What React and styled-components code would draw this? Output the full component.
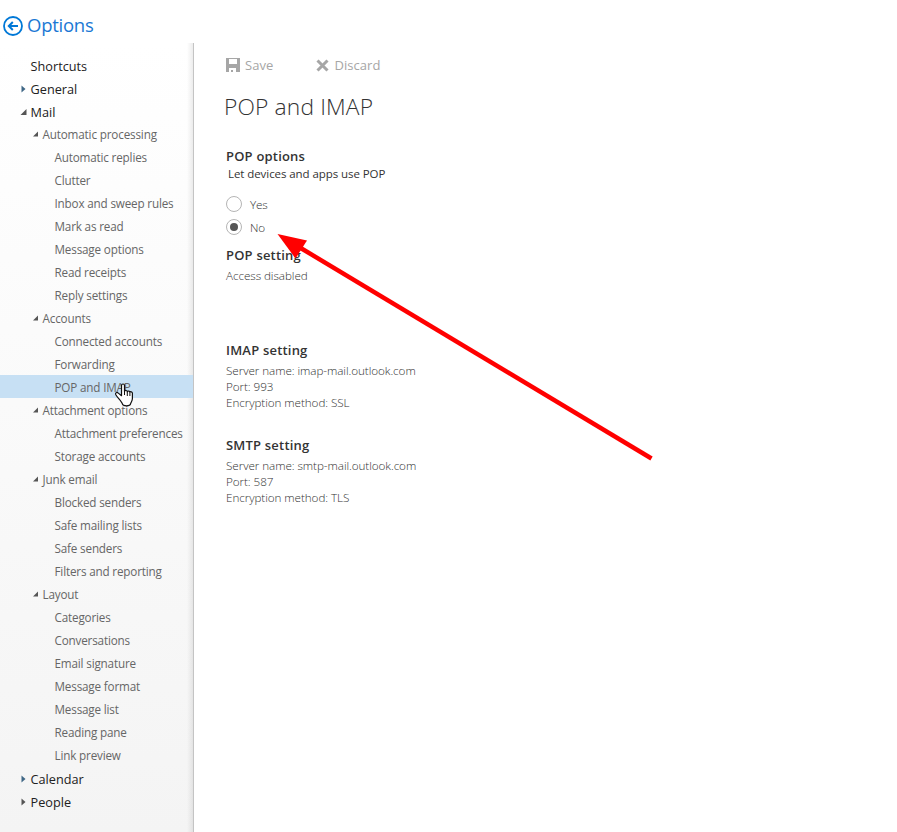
import React from 'react';
import styled, { createGlobalStyle, css } from 'styled-components';

const GlobalStyle = createGlobalStyle`
  * { box-sizing: border-box; }
  body { margin: 0; background: #fff; font-family: "Open Sans", "Noto Sans", sans-serif; color: #333; }
  h1, h2, p, ul { margin: 0; padding: 0; font-weight: 400; }
`;

const Page = styled.div`
  position: relative;
  width: 897px;
  height: 832px;
  overflow: hidden;
  display: flex;
  flex-direction: column;
`;

const Header = styled.header`
  height: 43px;
  flex: none;
  display: flex;
  align-items: center;
  padding: 8px 0 0 3px;
  gap: 4px;
  color: #1a78d4;
  font-size: 18.5px;
  line-height: 24px;
  letter-spacing: -0.25px;
  svg { flex: none; margin-top: 1px; }
  span { margin-top: -1px; }
`;

const Body = styled.div`
  display: flex;
  flex: 1;
`;

const Sidebar = styled.nav`
  width: 194px;
  flex: none;
  padding-top: 11px;
  border-right: 1px solid #c4c4c4;
  background:
    linear-gradient(to left, rgba(0, 0, 0, 0.075), rgba(0, 0, 0, 0) 6px),
    linear-gradient(#fff, #f4f4f4);
`;

const List = styled.ul`
  list-style: none;
`;

const Children = styled.div`
  margin: -1px 0 1px;
`;

const levels = [
  css`padding-left: 20px; font-size: 12.7px; font-weight: 500; color: #212121; letter-spacing: 0.02px;`,
  css`padding-left: 32px; font-size: 11.7px; color: #666; letter-spacing: -0.16px;`,
  css`padding-left: 44px; font-size: 11.7px; color: #666; letter-spacing: -0.17px;`,
];

const Row = styled.li`
  height: 23px;
  display: flex;
  align-items: center;
  line-height: 23px;
  white-space: nowrap;
  ${(p) => levels[p.$level]}
  ${(p) => p.$selected && css`background: #c7e0f4;`}
`;

const Marker = styled.span`
  width: 10.5px;
  height: 23px;
  padding-top: 1px;
  flex: none;
  display: flex;
  align-items: center;
  svg { display: block; }
`;

const Label = styled.span`
  height: 23px;
  padding-top: 1px;
`;

const Main = styled.main`
  flex: 1;
  padding: 12px 0 0 32px;
`;

const Toolbar = styled.div`
  display: flex;
  height: 20px;
  gap: 43px;
`;

const Action = styled.button`
  display: flex;
  align-items: center;
  gap: 5px;
  padding: 0;
  border: 0;
  background: none;
  font: 400 13px/20px "Open Sans", sans-serif;
  letter-spacing: 0.06px;
  color: #a6a6a6;
`;

const Title = styled.h1`
  margin: 15px 0 0 -2px;
  height: 34px;
  font-size: 22.8px;
  line-height: 34px;
  font-weight: 300;
  letter-spacing: 0.14px;
  color: #333;
`;

const Section = styled.section`
  margin-top: ${(p) => p.$top}px;
`;

const SectionTitle = styled.h2`
  font-size: 13px;
  line-height: 20px;
  font-weight: 600;
  letter-spacing: 0.2px;
  color: #333;
`;

const Hint = styled.p`
  padding-left: 2px;
  font-size: 11.5px;
  line-height: 16px;
  letter-spacing: -0.07px;
  color: #333;
`;

const Details = styled.p`
  margin-top: 2px;
  padding-bottom: 1px;
  font-size: 11.7px;
  line-height: 16px;
  font-weight: 300;
  letter-spacing: -0.07px;
  color: #333;
`;

const Options = styled.div`
  margin-top: 10px;
`;

const Option = styled.label`
  display: flex;
  align-items: center;
  height: 23px;
  gap: 8px;
  font-size: 11.7px;
  font-weight: 300;
  letter-spacing: -0.2px;
  color: #333;
`;

const Radio = styled.span`
  width: 16px;
  height: 16px;
  border: 1px solid #b5b5b5;
  border-radius: 50%;
  display: grid;
  place-items: center;
  &::after {
    content: "";
    width: 8px;
    height: 8px;
    border-radius: 50%;
    background: ${(p) => (p.$checked ? '#555' : 'transparent')};
  }
`;

const Overlay = styled.svg`
  position: absolute;
  left: 0;
  top: 0;
  pointer-events: none;
`;

const BackIcon = () => (
  <svg width="20" height="20" viewBox="0 0 20 20" fill="none" stroke="#0078d7">
    <circle cx="10" cy="10" r="9" strokeWidth="1.8" />
    <path d="M15 10H6M9.8 6 5.8 10l4 4" strokeWidth="2" />
  </svg>
);

const SaveIcon = () => (
  <svg width="14" height="14" viewBox="0 0 14 14">
    <path fill="#a6a6a6" fillRule="evenodd" d="M0 0h14v14H0zM3 1v5h8V1zM3 10v4H5v-2h2v2h3v-4z" />
  </svg>
);

const DiscardIcon = () => (
  <svg width="13" height="13" viewBox="0 0 13 13" stroke="#a6a6a6" strokeWidth="3">
    <path d="m1.500 1.500 10 10M11.500 1.500l-10 10" />
  </svg>
);

const Arrow = ({ state, color, level }) => {
  if (state === 'closed') {
    return <svg width="6" height="8" viewBox="0 0 6 8"><path d="M1.500 .5 5.500 4l-4 3.500z" fill={color} /></svg>;
  }
  if (state === 'open') {
    return <svg width="7" height="6" viewBox="0 0 7 6"><path d={level ? 'M6 .5V5.500H1z' : 'M6.500 0V6H.5z'} fill="#555" /></svg>;
  }
  return null;
};

const tree = [
  { label: 'Shortcuts' },
  { label: 'General', state: 'closed', color: '#3f6785' },
  {
    label: 'Mail', state: 'open', items: [
      { label: 'Automatic processing', items: ['Automatic replies', 'Clutter', 'Inbox and sweep rules', 'Mark as read', 'Message options', 'Read receipts', 'Reply settings'] },
      { label: 'Accounts', items: ['Connected accounts', 'Forwarding', 'POP and IMAP'] },
      { label: 'Attachment options', items: ['Attachment preferences', 'Storage accounts'] },
      { label: 'Junk email', items: ['Blocked senders', 'Safe mailing lists', 'Safe senders', 'Filters and reporting'] },
      { label: 'Layout', items: ['Categories', 'Conversations', 'Email signature', 'Message format', 'Message list', 'Reading pane', 'Link preview'] },
    ],
  },
  { label: 'Calendar', state: 'closed', color: '#3f6785' },
  { label: 'People', state: 'closed', color: '#555' },
];

const NavRow = ({ label, level, state, color, selected }) => (
  <Row $level={level} $selected={selected}>
    <Marker><Arrow state={state} color={color} level={level} /></Marker>
    <Label>{label}</Label>
  </Row>
);

export default function App() {
  return (
    <Page>
      <GlobalStyle />
      <Header><BackIcon /><span>Options</span></Header>
      <Body>
        <Sidebar>
          <List>
            {tree.map((top) => (
              <React.Fragment key={top.label}>
                <NavRow {...top} level={0} />
                {top.items && (
                  <Children>
                    {top.items.map((group) => (
                      <List key={group.label}>
                        <NavRow label={group.label} level={1} state="open" />
                        {group.items.map((item) => (
                          <NavRow key={item} label={item} level={2} selected={item === 'POP and IMAP'} />
                        ))}
                      </List>
                    ))}
                  </Children>
                )}
              </React.Fragment>
            ))}
          </List>
        </Sidebar>
        <Main>
          <Toolbar>
            <Action><SaveIcon />Save</Action>
            <Action><DiscardIcon />Discard</Action>
          </Toolbar>
          <Title>POP and IMAP</Title>
          <Section $top={22}>
            <SectionTitle>POP options</SectionTitle>
            <Hint>Let devices and apps use POP</Hint>
            <Options>
              <Option><Radio />Yes</Option>
              <Option><Radio $checked />No</Option>
            </Options>
          </Section>
          <Section $top={7}>
            <SectionTitle>POP setting</SectionTitle>
            <Details>Access disabled</Details>
          </Section>
          <Section $top={56}>
            <SectionTitle>IMAP setting</SectionTitle>
            <Details>Server name: imap-mail.outlook.com<br />Port: 993<br />Encryption method: SSL</Details>
          </Section>
          <Section $top={24}>
            <SectionTitle>SMTP setting</SectionTitle>
            <Details>Server name: smtp-mail.outlook.com<br />Port: 587<br />Encryption method: TLS</Details>
          </Section>
        </Main>
      </Body>
      <Overlay width="897" height="832" viewBox="0 0 897 832">
        <path d="M299 247 651.500 458.500" stroke="#f00" strokeWidth="4.500" />
        <path d="M277.500 234 307 240.500 295.500 258.500z" fill="#f00" />
        <path
          d="M121.500 385.500c0-2 3-2 3 0v6c.3-1.500 2.800-1.300 2.800.3.300-1.200 2.600-1 2.600.5.400-1 2.500-.6 2.500 1v5.200c0 2.500-1.400 3.500-1.800 5.200-.4 2.800-7.700 2.800-8.300 0-.5-2.200-5.300-6.500-6.600-9.200-.6-1.700 1-2.700 2.600-1.400l3.200 2.600z"
          fill="#fff" stroke="#111" strokeWidth="1.200" strokeLinejoin="round"
        />
        <path d="M124.500 391v4M127.300 392v4M129.900 392.500v3.500" stroke="#111" strokeWidth="1" />
      </Overlay>
    </Page>
  );
}
